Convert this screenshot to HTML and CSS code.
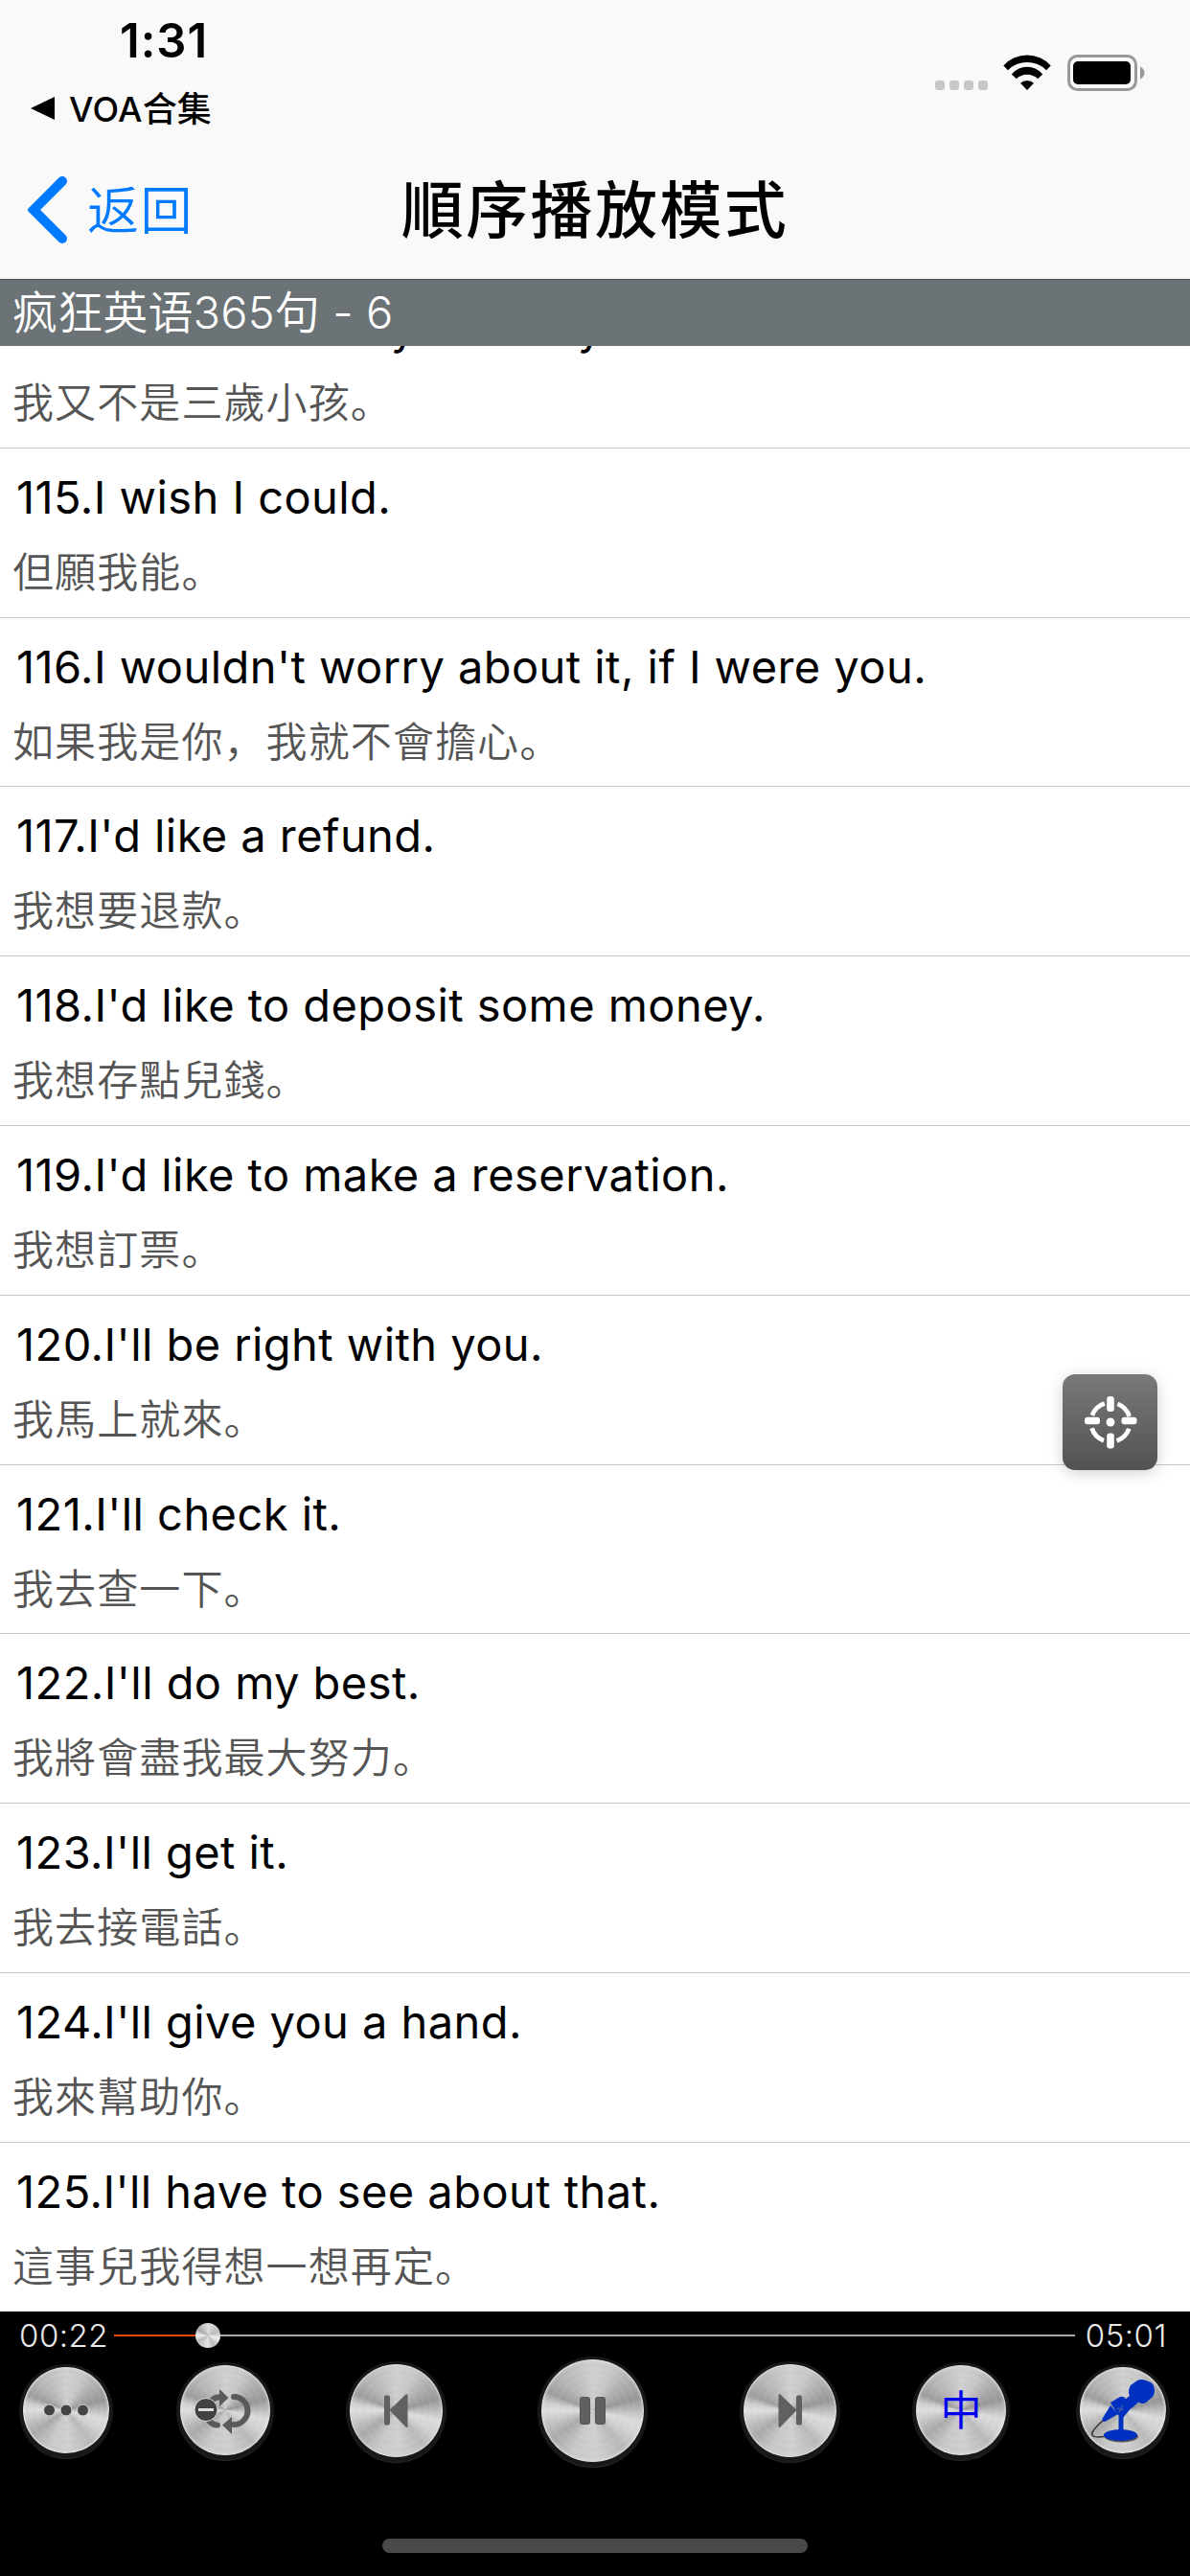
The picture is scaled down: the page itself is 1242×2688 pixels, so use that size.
FILE: index.html
```
<!DOCTYPE html>
<html lang="zh">
<head>
  <meta charset="UTF-8">
  <title>順序播放模式</title>
  <link rel="stylesheet" href="styles.css">
</head>
<body>
  <header class="top">
    <div class="status-bar">
      <div class="status-left">
        <div class="time">1:31</div>
        <div class="back-app">
          <svg width="25" height="24" viewBox="0 0 25 24"><path d="M0 12L25 0V24Z"/></svg>
          <span>VOA合集</span>
        </div>
      </div>
      <div class="status-right">
        <div class="signal"><i></i><i></i><i></i><i></i></div>
        <svg class="wifi" width="50" height="37" viewBox="0 0 50 37">
          <path d="M.3 11.5A33 33 0 0 1 49.7 11.5L45 16.3A28 28 0 0 0 5 16.3Z"/>
          <path d="M8.8 20.5A21 21 0 0 1 41.2 20.5L36.2 25.2A16 16 0 0 0 13.8 25.2Z"/>
          <path d="M18 29.8A10 10 0 0 1 32 29.8L25 37Z"/>
        </svg>
        <svg class="battery" width="81" height="38" viewBox="0 0 81 38">
          <rect x="1.5" y="1.5" width="70" height="35" rx="9" fill="none" stroke="#999" stroke-width="3"/>
          <rect x="6" y="7" width="60" height="24" rx="5"/>
          <path d="M76 12.500Q80.500 15 80.500 19T76 25.500Z" fill="#999"/>
        </svg>
      </div>
    </div>
    <nav class="nav">
      <a class="back">
        <svg width="42" height="72" viewBox="0 0 42 72"><path d="M36 6L6 36L36 66"/></svg>
        <span>返回</span>
      </a>
      <h1>順序播放模式</h1>
    </nav>
  </header>

  <main>
    <h2 class="section-header">疯狂英语365句 - 6</h2>
    <ul class="list">
      <li><p class="en">114.I wasn't born yesterday.</p><p class="zh">我又不是三歲小孩。</p></li>
      <li><p class="en">115.I wish I could.</p><p class="zh">但願我能。</p></li>
      <li><p class="en">116.I wouldn't worry about it, if I were you.</p><p class="zh">如果我是你，我就不會擔心。</p></li>
      <li><p class="en">117.I'd like a refund.</p><p class="zh">我想要退款。</p></li>
      <li><p class="en">118.I'd like to deposit some money.</p><p class="zh">我想存點兒錢。</p></li>
      <li><p class="en">119.I'd like to make a reservation.</p><p class="zh">我想訂票。</p></li>
      <li><p class="en">120.I'll be right with you.</p><p class="zh">我馬上就來。</p></li>
      <li><p class="en">121.I'll check it.</p><p class="zh">我去查一下。</p></li>
      <li><p class="en">122.I'll do my best.</p><p class="zh">我將會盡我最大努力。</p></li>
      <li><p class="en">123.I'll get it.</p><p class="zh">我去接電話。</p></li>
      <li><p class="en">124.I'll give you a hand.</p><p class="zh">我來幫助你。</p></li>
      <li><p class="en">125.I'll have to see about that.</p><p class="zh">這事兒我得想一想再定。</p></li>
    </ul>
    <button class="locate">
      <svg width="56" height="56" viewBox="-28 -28 56 56">
        <circle r="20.500" fill="none" stroke="#fff" stroke-width="4.800" stroke-dasharray="18.400 13.800" stroke-dashoffset="-6.900"/>
        <g fill="#fff">
          <rect x="-3.800" y="-27" width="7.600" height="16" rx="3"/>
          <rect x="-3.800" y="11.500" width="7.600" height="16" rx="3"/>
          <rect x="-27" y="-5.300" width="16" height="7.600" rx="3"/>
          <rect x="11.500" y="-5.300" width="16" height="7.600" rx="3"/>
          <circle r="4.500"/>
        </g>
      </svg>
    </button>
  </main>

  <footer class="player">
    <div class="progress">
      <span class="clock">00:22</span>
      <div class="track">
        <div class="played"></div>
        <div class="thumb"></div>
      </div>
      <span class="clock">05:01</span>
    </div>
    <div class="controls">
      <button class="knob small">
        <svg width="90" height="90" viewBox="-45 -45 90 90">
          <g fill="#444" stroke="#ddd" stroke-width="1"><circle cx="-17.500" r="6"/><circle r="6"/><circle cx="17.500" r="6"/></g>
        </svg>
      </button>
      <button class="knob medium repeat">
        <svg width="94" height="94" viewBox="-47 -47 94 94">
          <g fill="none" stroke="#5a5a5a" stroke-width="6" stroke-linecap="round">
            <path d="M9 -14A14.500 14.500 0 0 1 9 15"/>
            <path d="M-15 -9Q-11 -14 -6 -13.500"/>
            <path d="M-17 11Q-13 15.500 -8 15.500"/>
          </g>
          <path d="M-6 -22L3.500 -13L-6 -4Z" fill="#5a5a5a"/>
          <path d="M7 7V25L-3 15.500Z" fill="#5a5a5a"/>
          <circle cx="-20" cy="-.5" r="12" fill="#424242" stroke="#ddd"/>
          <path d="M-28 -.5H-12" stroke="#ddd" stroke-width="3"/>
        </svg>
      </button>
      <button class="knob large prev">
        <svg width="97" height="97" viewBox="-48.500 -48.500 97 97">
          <g fill="#606060"><rect x="-12.500" y="-16" width="6" height="31" rx="2"/><path d="M-7 -.5L10 -17Q12 -18 12 -16V16Q12 19 10 17Z"/></g>
        </svg>
      </button>
      <button class="knob main">
        <svg width="107" height="107" viewBox="-53.500 -53.500 107 107">
          <g fill="#606060" stroke="#555"><rect x="-13" y="-14" width="10" height="28" rx="2"/><rect x="3" y="-14" width="10" height="28" rx="2"/></g>
        </svg>
      </button>
      <button class="knob large next">
        <svg width="97" height="97" viewBox="-48.500 -48.500 97 97">
          <g fill="#606060"><rect x="6.500" y="-16" width="6" height="31" rx="2"/><path d="M7 -.5L-10 -17Q-12 -18 -12 -16V16Q-12 19 -10 17Z"/></g>
        </svg>
      </button>
      <button class="knob medium lang">中</button>
      <button class="knob small mic">
        <svg width="90" height="90" viewBox="0 0 90 90">
          <path d="M24 56Q9 69 14 72Q17 74 28 72" fill="none" stroke="#333" stroke-width="1.500"/>
          <ellipse cx="43.500" cy="72.500" rx="17.500" ry="6" fill="#555"/>
          <g fill="#0030c0">
            <path d="M53 19L60 14Q64 12 69 14L74 16Q77 17 78 24Q78 28 76 31L69 37Q66 39 62 37L55 35Q53 34 51 27Q51 22 53 19Z"/>
            <path d="M46 35L53 29L61 37L54 43Z"/>
            <path d="M32 37L42 31Q45 30 47 32L54 42L45 53L39 49Z"/>
            <path d="M32 40L40 49L26 57Q22 57 24 53Z"/>
            <path d="M40.500 50H45.500V70H40.500Z"/>
            <ellipse cx="42.500" cy="71" rx="17.500" ry="6"/>
          </g>
          <path d="M39 43L46 45M41 47L45 40" stroke="#3f5ba8" stroke-width="1.500"/>
        </svg>
      </button>
    </div>
    <div class="home-indicator"></div>
  </footer>
</body>
</html>
```

FILE: styles.css
```
* {
  box-sizing: border-box;
}

body {
  margin: 0;
  width: 1242px;
  height: 2688px;
  display: flex;
  flex-direction: column;
  overflow: hidden;
  background: #fff;
  color: #000;
  font-family: Inter, "Noto Sans CJK SC", sans-serif;
}

h1, h2, p, ul {
  margin: 0;
  padding: 0;
}

ul {
  list-style: none;
}

button {
  border: none;
  padding: 0;
  font-family: inherit;
}

svg {
  display: block;
}

.top {
  height: 291px;
  background: #f9f9f9;
}

.status-bar {
  height: 146px;
  display: flex;
  justify-content: space-between;
  padding: 12px 47px 0 32px;
}

.time {
  padding-left: 93px;
  font-size: 49px;
  line-height: 62px;
  font-weight: 600;
  letter-spacing: 1px;
}

.back-app {
  display: flex;
  align-items: center;
  gap: 15px;
  height: 52px;
  margin-top: 13px;
  font-size: 36px;
  font-weight: 500;
}

.back-app span {
  margin-top: -5px;
  letter-spacing: 0.2px;
}

.status-right {
  display: flex;
  align-items: flex-end;
  height: 83px;
}

.signal {
  display: flex;
  gap: 5px;
  margin: 0 16px 1px 0;
}

.signal i {
  width: 10px;
  height: 10px;
  border-radius: 3px;
  background: #c7c7c7;
}

.wifi {
  margin: 0 17px 1px 0;
}

.nav {
  position: relative;
  height: 138px;
  display: flex;
  align-items: center;
  justify-content: center;
}

.back {
  position: absolute;
  left: 29px;
  top: 35px;
  display: flex;
  align-items: center;
  gap: 20px;
  color: #007aff;
  font-size: 54px;
  font-weight: 350;
  letter-spacing: 1.4px;
}

.back span {
  margin-top: -4px;
}

.back path {
  fill: none;
  stroke: #007aff;
  stroke-width: 10;
  stroke-linecap: round;
  stroke-linejoin: miter;
}

h1 {
  font-size: 65px;
  font-weight: 500;
  letter-spacing: 2.4px;
}

main {
  position: relative;
  height: 2121px;
}

.section-header {
  height: 70px;
  line-height: 68px;
  padding-left: 13px;
  border-top: 1px solid #4f5556;
  background: #6b7376;
  color: #fff;
  font-size: 47px;
  font-weight: 350;
  letter-spacing: 0.15px;
}

.list {
  height: 2051px;
  overflow: hidden;
}

.list li {
  height: 176.8px;
  padding: 19px 0 0 13px;
  border-bottom: 1px solid #c8c7cc;
}

/* scrolled part way under the section header */
.list li:first-child {
  margin-top: -70px;
}

.en {
  padding-left: 4px;
  font-size: 47px;
  line-height: 64px;
  letter-spacing: 0.44px;
}

.zh {
  margin-top: 14px;
  color: #555;
  font-size: 43px;
  font-weight: 350;
  line-height: 64px;
  letter-spacing: 1.1px;
}

.locate {
  position: absolute;
  right: 34px;
  top: 1143px;
  width: 99px;
  height: 100px;
  display: grid;
  place-items: center;
  border-radius: 13px;
  background: linear-gradient(#797979, #525252);
  box-shadow: 0 3px 16px rgba(0, 0, 0, 0.18);
}

.player {
  height: 276px;
  background: #000;
}

.progress {
  height: 50px;
  display: flex;
  align-items: center;
  padding: 0 24px 0 20px;
}

.clock {
  width: 99px;
  color: #e8e8e8;
  font-size: 33px;
  font-weight: 350;
  letter-spacing: 0.5px;
}

.progress .clock:last-child {
  width: 90px;
  text-align: right;
}

.track {
  flex: 1;
  display: flex;
  align-items: center;
  height: 26px;
  margin-right: 6px;
  background: linear-gradient(#a8a8a8, #a8a8a8) center / 100% 2px no-repeat;
}

.played {
  width: 85px;
  height: 2px;
  background: #ef4a0a;
}

.thumb {
  width: 26px;
  height: 26px;
  border-radius: 50%;
  background: conic-gradient(#ddd, #bbb 70deg, #eee 105deg, #bbb 150deg, #e4e4e4 180deg, #bbb 240deg, #f2f2f2 270deg, #aaa 300deg, #ddd);
}

.controls {
  display: flex;
  align-items: center;
  height: 106px;
  padding-left: 24px;
}

/* brushed metal */
.knob {
  flex: none;
  display: grid;
  place-items: center;
  border-radius: 50%;
  background:
    repeating-radial-gradient(rgba(255, 255, 255, 0.03) 0 3px, rgba(0, 0, 0, 0.01) 6px 7px),
    conic-gradient(#cfcfcf, #c8c8c8 25deg, #aaa 55deg, #979797 75deg, #b8b8b8 88deg, #dcdcdc 103deg, #d2d2d2 120deg, #b9b9b9 140deg, #cfcfcf 175deg, #c9c9c9 205deg, #a9a9a9 235deg, #bdbdbd 250deg, #dedede 270deg, #d0d0d0 279deg, #9d9d9d 292deg, #b5b5b5 315deg, #cfcfcf);
  box-shadow: inset 0 0 2px 1px #e8e8e8, 0 1px 0 4px #181818, 0 3px 1px 3px #2b2b2b;
}

.small {
  width: 90px;
  height: 90px;
}

.medium {
  width: 94px;
  height: 94px;
}

.large {
  width: 97px;
  height: 97px;
}

.main {
  width: 107px;
  height: 107px;
}

.repeat {
  margin: 0 83px 0 74px;
}

.prev {
  margin-right: 103px;
}

.next {
  margin: 0 83px 0 104px;
}

.lang {
  padding-bottom: 6px;
  color: #0000f0;
  font-size: 43px;
}

.mic {
  margin-left: 77px;
}

.home-indicator {
  width: 444px;
  height: 15px;
  margin: 81px auto 0;
  border-radius: 8px;
  background: #494949;
}
```
